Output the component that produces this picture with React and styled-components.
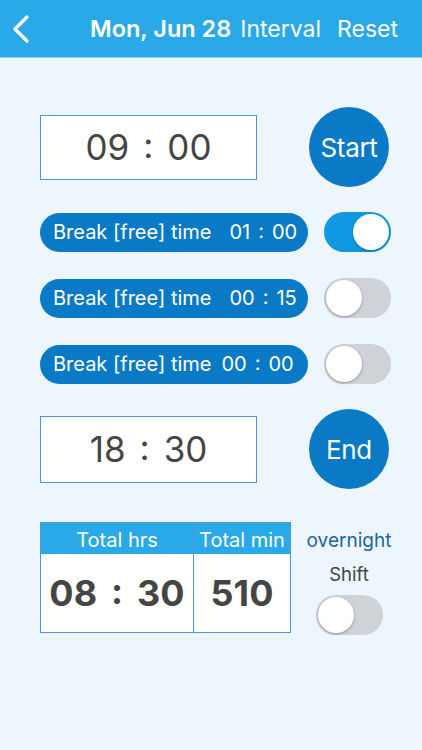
import React from "react";
import styled, { createGlobalStyle } from "styled-components";

const Global = createGlobalStyle`
  html, body { margin: 0; padding: 0; }
  body {
    background: #edf5fd;
    font-family: Inter, "Open Sans", Roboto, sans-serif;
  }
`;

const Page = styled.div`
  width: 422px;
  height: 750px;
  background: #edf5fd;
  display: flex;
  flex-direction: column;
`;

const Header = styled.div`
  height: 58px;
  background: #29a9e8;
  border-bottom: 1px solid #7fcdf3;
  display: flex;
  align-items: center;
  color: #fff;
  box-sizing: border-box;
`;

const Back = styled.div`
  width: 50px;
  padding-left: 10px;
  display: flex;
  align-items: center;
`;

const Title = styled.div`
  margin-left: 30px;
  font-size: 23.5px;
  font-weight: 600;
  letter-spacing: 0px;
`;

const HeadLink = styled.div`
  font-size: 23px;
  font-weight: 400;
  margin-left: ${(p) => p.$ml}px;
`;

const Content = styled.div`
  padding: 49px 0 0 40px;
  display: flex;
  flex-direction: column;
`;

const TimeRow = styled.div`
  display: flex;
  align-items: center;
  width: 349px;
  justify-content: space-between;
  margin-bottom: ${(p) => p.$mb}px;
`;

const TimeBox = styled.div`
  width: 217px;
  height: ${(p) => p.$h}px;
  box-sizing: border-box;
  border: 1.5px solid #4d95dc;
  background: #fff;
  display: flex;
  align-items: center;
  justify-content: center;
  font-size: 35px;
  color: #454545;
  font-weight: 400;
`;

const Colon = styled.span`
  margin: 0 14px;
  position: relative;
  top: -2px;
`;

const Circle = styled.div`
  width: 80px;
  height: 80px;
  border-radius: 50%;
  background: #0b7ac6;
  color: #fff;
  display: flex;
  align-items: center;
  justify-content: center;
  font-size: 26px;
  letter-spacing: -0.3px;
`;

const BreakRow = styled.div`
  display: flex;
  align-items: center;
  gap: 16px;
  height: 40px;
  margin-bottom: ${(p) => p.$mb}px;
`;

const Pill = styled.div`
  width: 268px;
  height: 39px;
  border-radius: 20px;
  background: #0b7ac6;
  color: #fff;
  display: flex;
  align-items: center;
  box-sizing: border-box;
  padding-left: 13px;
  font-size: 20px;
  white-space: pre;
`;

const PillTime = styled.span`
  margin-left: ${(p) => p.$ml}px;
`;

const SmallColon = styled.span`
  margin: 0 8px;
  position: relative;
  top: -1px;
`;

const Switch = styled.div`
  width: 67px;
  height: 40px;
  border-radius: 20px;
  background: ${(p) => (p.$on ? "#1298e2" : "#cfd2d7")};
  position: relative;
  flex-shrink: 0;
  &::after {
    content: "";
    position: absolute;
    top: 2px;
    left: ${(p) => (p.$on ? "29px" : "2px")};
    width: 36px;
    height: 36px;
    border-radius: 50%;
    background: #fff;
    box-shadow: 0 1px 3px rgba(0, 0, 0, 0.3);
  }
`;

const Bottom = styled.div`
  display: flex;
  align-items: flex-start;
`;

const Table = styled.div`
  width: 251px;
  height: 111px;
  box-sizing: border-box;
  border: 1.5px solid #4d95dc;
  display: grid;
  grid-template-columns: 152px 1fr;
  grid-template-rows: 31px 1fr;
  background: #fff;
`;

const TH = styled.div`
  background: #29a9e8;
  color: #fff;
  font-size: 20px;
  display: flex;
  align-items: center;
  justify-content: center;
  padding-top: 2px;
  border-left: ${(p) => (p.$div ? "1.5px solid #4d95dc" : "none")};
`;

const TD = styled.div`
  color: #454545;
  font-size: 36px;
  font-weight: 700;
  display: flex;
  align-items: center;
  justify-content: center;
  border-left: ${(p) => (p.$div ? "1.5px solid #4d95dc" : "none")};
`;

const Side = styled.div`
  width: 116px;
  display: flex;
  flex-direction: column;
  align-items: center;
  padding-top: 7px;
`;

const Over = styled.div`
  color: #1d64a0;
  font-size: 19px;
`;

const Shift = styled.div`
  color: #454545;
  font-size: 18.5px;
  margin-top: 11px;
  margin-bottom: 10px;
`;

export default function App() {
  return (
    <Page>
      <Global />
      <Header>
        <Back>
          <svg width="22" height="30" viewBox="0 0 22 30">
            <path d="M17 3 L5 15 L17 27" fill="none" stroke="#fff" strokeWidth="3.2" strokeLinecap="round" strokeLinejoin="round" />
          </svg>
        </Back>
        <Title>Mon, Jun 28</Title>
        <HeadLink $ml={9}>Interval</HeadLink>
        <HeadLink $ml={16}>Reset</HeadLink>
      </Header>
      <Content>
        <TimeRow $mb={25}>
          <TimeBox $h={65}>
            09<Colon>:</Colon>00
          </TimeBox>
          <Circle>Start</Circle>
        </TimeRow>
        <BreakRow $mb={26}>
          <Pill>
            Break [free] time<PillTime $ml={18}>01<SmallColon>:</SmallColon>00</PillTime>
          </Pill>
          <Switch $on />
        </BreakRow>
        <BreakRow $mb={26}>
          <Pill>
            Break [free] time<PillTime $ml={18}>00<SmallColon>:</SmallColon>15</PillTime>
          </Pill>
          <Switch />
        </BreakRow>
        <BreakRow $mb={25}>
          <Pill>
            Break [free] time<PillTime $ml={10}>00<SmallColon>:</SmallColon>00</PillTime>
          </Pill>
          <Switch />
        </BreakRow>
        <TimeRow $mb={33}>
          <TimeBox $h={67}>
            18<Colon>:</Colon>30
          </TimeBox>
          <Circle>End</Circle>
        </TimeRow>
        <Bottom>
          <Table>
            <TH>Total hrs</TH>
            <TH $div>Total min</TH>
            <TD>
              08<Colon>:</Colon>30
            </TD>
            <TD $div>510</TD>
          </Table>
          <Side>
            <Over>overnight</Over>
            <Shift>Shift</Shift>
            <Switch />
          </Side>
        </Bottom>
      </Content>
    </Page>
  );
}
